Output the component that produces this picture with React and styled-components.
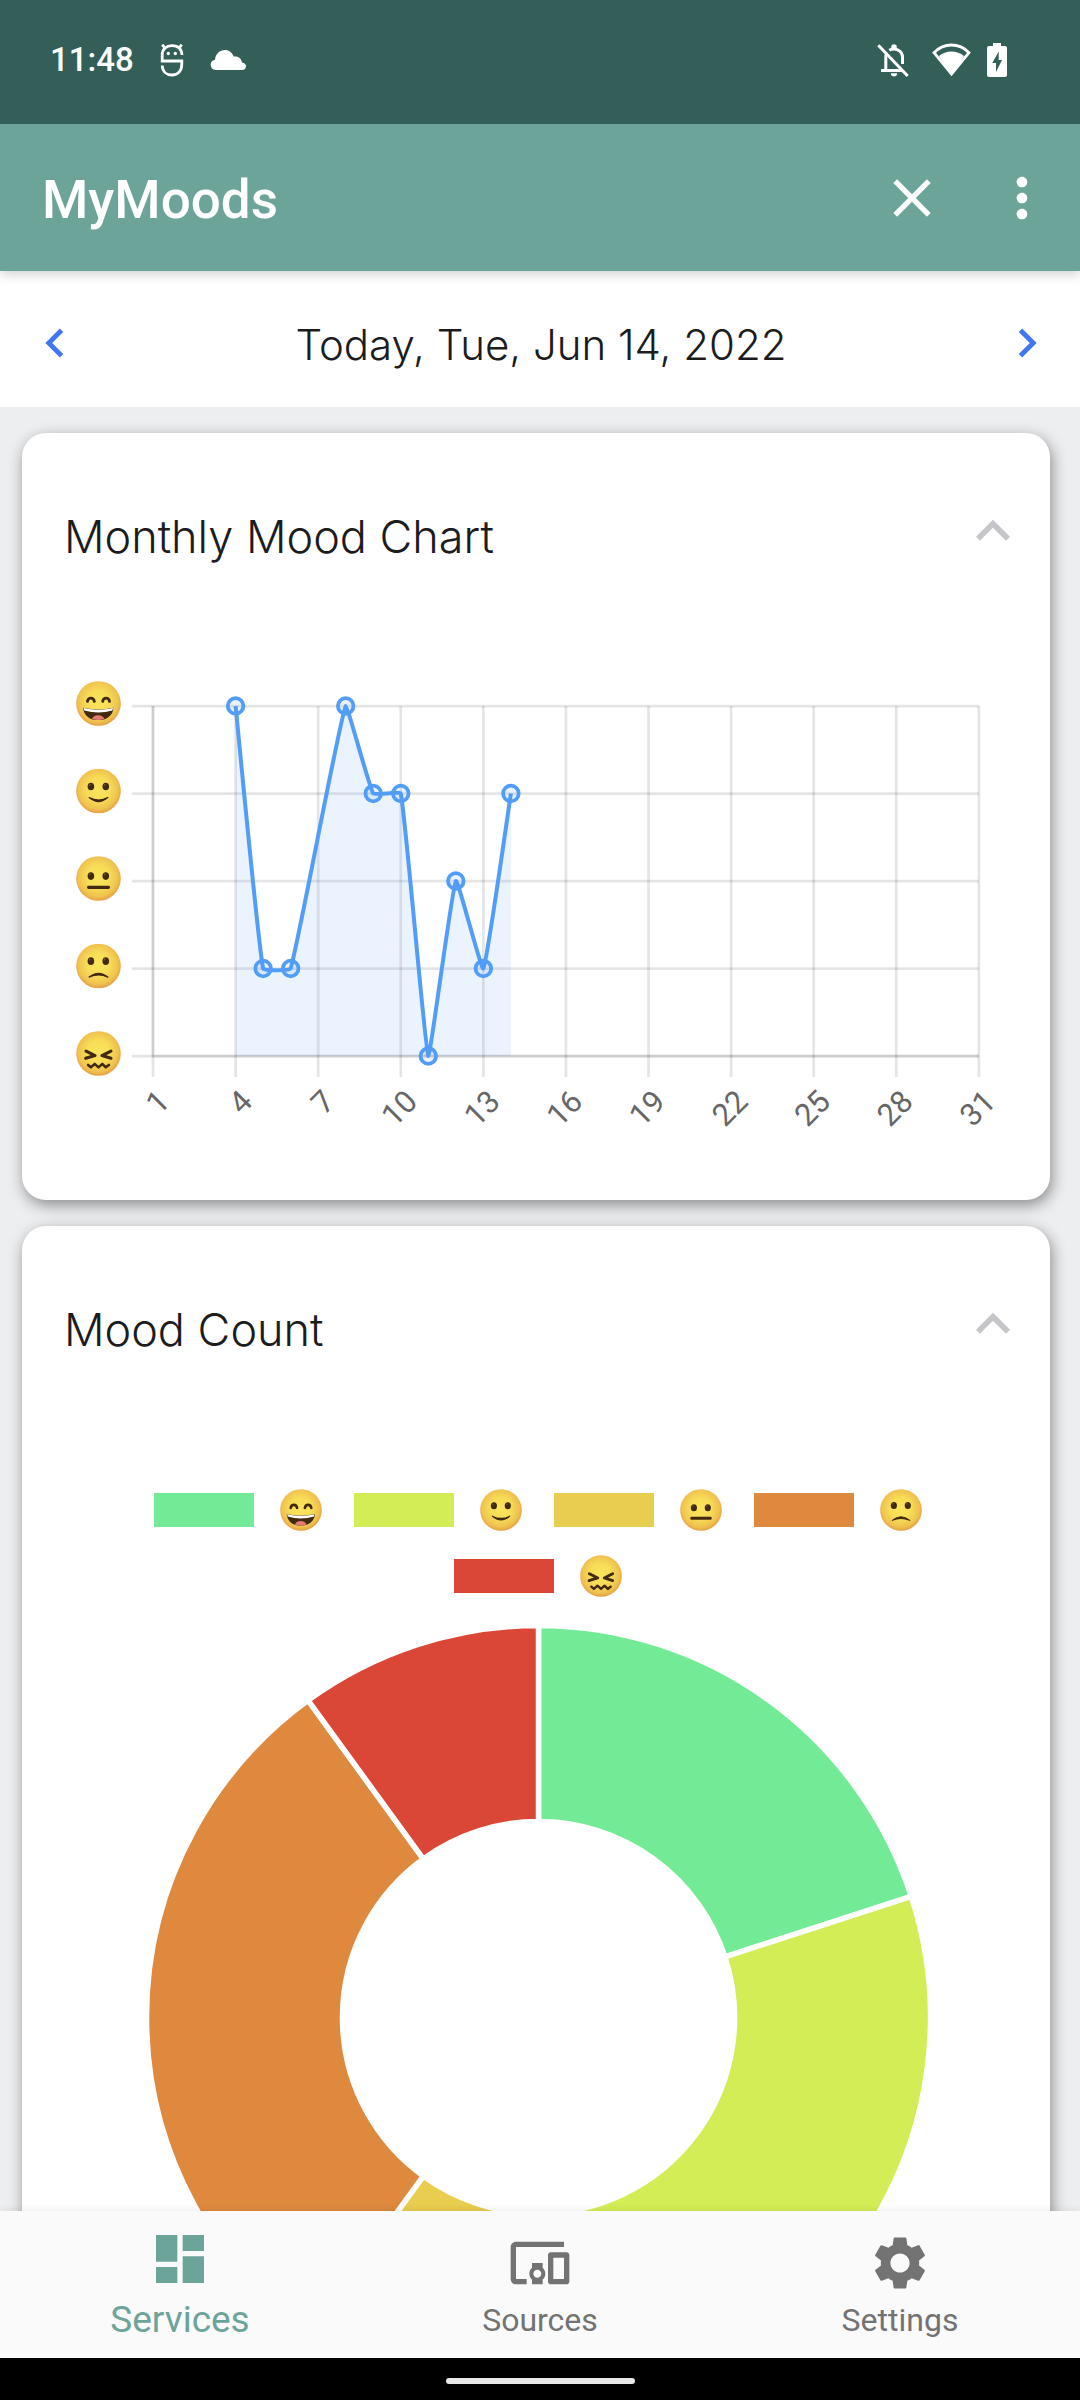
import React, { useId, useState } from "react";
import styled, { createGlobalStyle } from "styled-components";
import {
  MdClose,
  MdDashboard,
  MdDevicesOther,
  MdKeyboardArrowDown,
  MdKeyboardArrowLeft,
  MdKeyboardArrowRight,
  MdKeyboardArrowUp,
  MdMoreVert,
  MdSettings,
} from "react-icons/md";

const GlobalStyle = createGlobalStyle`
  *, *::before, *::after { box-sizing: border-box; }
  body { margin: 0; }
  button { border: 0; padding: 0; background: none; color: inherit; font: inherit; cursor: pointer; }
  h1, h2, p, ul { margin: 0; padding: 0; font-weight: inherit; }
  ul { list-style: none; }
  svg { display: block; flex: none; }
`;

const Screen = styled.div`
  display: flex;
  flex-direction: column;
  height: 100vh;
  background: #edeef0;
  font-family: Roboto, "Liberation Sans", sans-serif;
`;

const StatusBar = styled.header`
  position: relative;
  z-index: 2;
  display: flex;
  align-items: center;
  justify-content: space-between;
  flex: none;
  height: 124px;
  padding: 0 73px 4px 50px;
  background: #335f58;
  color: #fff;
`;

const StatusGroup = styled.div`
  display: flex;
  align-items: center;
  gap: ${(p) => p.$gap}px;
`;

const Clock = styled.span`
  font-size: 33px;
  font-weight: 500;
  line-height: 44px;
`;

const AppBar = styled.div`
  position: relative;
  z-index: 1;
  display: flex;
  align-items: center;
  flex: none;
  height: 147px;
  padding: 0 26px 0 42px;
  gap: 46px;
  background: #6da49a;
  color: #fff;
  box-shadow: 0 2px 12px rgba(0, 0, 0, 0.22);
`;

const AppTitle = styled.h1`
  flex: 1;
  padding-top: 4px;
  font-size: 53px;
  font-weight: 500;
  line-height: 64px;
`;

const IconButton = styled.button`
  display: flex;
  color: ${(p) => p.$color || "inherit"};
`;

const DateBar = styled.div`
  display: flex;
  align-items: center;
  justify-content: space-between;
  flex: none;
  height: 136px;
  padding: 8px 24px 0 26px;
  background: #fff;
`;

const DateText = styled.p`
  padding-top: 4px;
  color: #1c1c1e;
  font-family: Inter, "Open Sans", sans-serif;
  font-size: 42px;
  font-weight: 300;
  line-height: 64px;
`;

const Content = styled.main`
  display: flex;
  flex-direction: column;
  flex: 1;
  gap: 26px;
  min-height: 0;
  padding: 26px 30px 26px 22px;
  overflow-y: auto;
  scrollbar-width: none;
`;

const Card = styled.section`
  flex: none;
  padding-bottom: ${(p) => (p.$open ? 60 : 0)}px;
  border-radius: 24px;
  background: #fff;
  box-shadow: 2px 5px 15px rgba(0, 0, 0, 0.42);
`;

const CardHeader = styled.div`
  display: flex;
  align-items: flex-start;
  justify-content: space-between;
  padding: 64px 23px 0 42px;
`;

const CardTitle = styled.h2`
  color: #1c1c1e;
  font-family: Inter, "Open Sans", sans-serif;
  font-size: 45px;
  font-weight: 300;
  line-height: 80px;
`;

const LineChartSvg = styled.svg`
  width: 100%;
  height: auto;
  margin-top: 93px;
`;

const Tick = styled.text`
  fill: #666;
  font-family: Roboto, "Liberation Sans", sans-serif;
  font-size: 31px;
  text-anchor: end;
  dominant-baseline: central;
`;

const Legend = styled.ul`
  display: flex;
  flex-wrap: wrap;
  justify-content: center;
  gap: 24px 32px;
  margin-top: 119px;
  padding: 0 98px 0 102px;
`;

const LegendItem = styled.li`
  display: flex;
  align-items: center;
  gap: 26px;
`;

const Swatch = styled.span`
  width: 100px;
  height: 34px;
  background: ${(p) => p.$color};
`;

const DonutWrap = styled.div`
  display: flex;
  justify-content: center;
  margin-top: 28px;
  padding: 0 98px 0 102px;
`;

const DonutSvg = styled.svg`
  width: 100%;
  max-width: 785px;
  height: auto;
  flex: 0 1 auto;
`;

const TabBar = styled.nav`
  position: relative;
  display: flex;
  flex: none;
  height: 147px;
  background: #fafafa;
  box-shadow: 0 -1px 8px rgba(0, 0, 0, 0.08);
`;

const Tab = styled.a`
  display: flex;
  flex: 1;
  flex-direction: column;
  align-items: center;
  justify-content: flex-end;
  gap: ${(p) => (p.$active ? 7 : 3)}px;
  padding-bottom: 16px;
  color: ${(p) => (p.$active ? "#6da49a" : "#737373")};
  font-size: ${(p) => (p.$active ? 37 : 32)}px;
  line-height: 44px;
  text-decoration: none;
`;

const GestureBar = styled.footer`
  position: relative;
  display: flex;
  align-items: center;
  justify-content: center;
  flex: none;
  height: 42px;
  padding-top: 4px;
  background: #000;
`;

const GestureHandle = styled.span`
  width: 189px;
  height: 6px;
  border-radius: 3px;
  background: #e8e8e8;
`;

const MOODS = [
  { score: 5, name: "Great", color: "#73eb96", count: 2 },
  { score: 4, name: "Good", color: "#d2ed55", count: 3 },
  { score: 3, name: "Okay", color: "#e8cd4f", count: 1 },
  { score: 2, name: "Sad", color: "#df893f", count: 3 },
  { score: 1, name: "Awful", color: "#da4737", count: 1 },
];

const ENTRIES = [
  [4, 5],
  [5, 2],
  [6, 2],
  [8, 5],
  [9, 4],
  [10, 4],
  [11, 1],
  [12, 3],
  [13, 2],
  [14, 4],
];

const INK = "#412a10";

function Eyes({ y }) {
  return (
    <g fill={INK}>
      <ellipse cx="43" cy={y} rx="9.5" ry="11" />
      <ellipse cx="86" cy={y} rx="9.5" ry="11" />
      <circle cx="40" cy={y - 5} r="2.5" fill="#7a5a2a" />
      <circle cx="83" cy={y - 5} r="2.5" fill="#7a5a2a" />
    </g>
  );
}

const FEATURES = {
  5: (
    <>
      <g fill="none" stroke={INK} strokeWidth="8" strokeLinecap="round">
        <path d="M33 59C35 46 51 46 53 59" />
        <path d="M77 59C79 46 95 46 97 59" />
      </g>
      <path d="M21 77Q65 87 108 77C107 101 87 113 64 113S22 101 21 77Z" fill={INK} />
      <path d="M22 78Q65 88 107 78L105 85Q65 97 24 85Z" fill="#fff" />
      <path d="M46 110Q50 99 64 99T82 110Q64 116 46 110Z" fill="#e57b72" />
    </>
  ),
  4: (
    <>
      <Eyes y={52} />
      <path d="M38 84Q65 107 92 84Q66 98 38 84Z" fill={INK} stroke={INK} strokeWidth="3.5" strokeLinejoin="round" />
    </>
  ),
  3: (
    <>
      <Eyes y={58} />
      <rect x="32" y="86" width="66" height="9" rx="4" fill={INK} />
    </>
  ),
  2: (
    <>
      <Eyes y={51} />
      <path d="M38 97Q65 75 92 97Q65 85 38 97Z" fill={INK} stroke={INK} strokeWidth="3.5" strokeLinejoin="round" />
    </>
  ),
  1: (
    <g fill="none" stroke={INK} strokeLinecap="round" strokeLinejoin="round">
      <path d="M29 58L55 71L28 79" strokeWidth="9" />
      <path d="M101 58L75 71L101 79" strokeWidth="9" />
      <path d="M35 98L43 105L54 95L65 105L76 95L86 105L95 98" strokeWidth="7.5" />
    </g>
  ),
};

function Face({ mood, label, size, x, y }) {
  const id = useId();
  return (
    <svg x={x} y={y} width={size} height={size} viewBox="0 0 130 130" role="img" aria-label={label}>
      <defs>
        <radialGradient id={id} cx="0.49" cy="0.46" r="0.56">
          <stop offset="0" stopColor="#fae55a" />
          <stop offset="0.45" stopColor="#f7dd58" />
          <stop offset="0.8" stopColor="#efc24e" />
          <stop offset="1" stopColor="#e39743" />
        </radialGradient>
      </defs>
      <circle cx="65" cy="65" r="64.5" fill={`url(#${id})`} />
      {FEATURES[mood]}
    </svg>
  );
}

const AXIS_X = 131;
const DAY = 27.53;
const TOP = 36;
const STEP = 87.5;
const BOTTOM = TOP + STEP * 4;
const dayX = (day) => AXIS_X + (day - 1) * DAY;
const moodY = (score) => TOP + (5 - score) * STEP;
const clampY = (y) => Math.min(BOTTOM, Math.max(TOP, y));

function smoothPath(points, tension) {
  const controls = points.map((p, i) => {
    const prev = points[i - 1] || p;
    const next = points[i + 1] || p;
    const before = Math.hypot(p[0] - prev[0], p[1] - prev[1]);
    const after = Math.hypot(next[0] - p[0], next[1] - p[1]);
    const a = (tension * before) / (before + after);
    const b = (tension * after) / (before + after);
    const dx = next[0] - prev[0];
    const dy = next[1] - prev[1];
    return {
      enter: [p[0] - a * dx, clampY(p[1] - a * dy)],
      leave: [p[0] + b * dx, clampY(p[1] + b * dy)],
    };
  });
  return points
    .map((p, i) => (i === 0 ? `M${p}` : `C${controls[i - 1].leave} ${controls[i].enter} ${p}`))
    .join("");
}

function LineChart() {
  const points = ENTRIES.map(([day, score]) => [dayX(day), moodY(score)]);
  const line = smoothPath(points, 0.1);
  const days = Array.from({ length: 11 }, (_, i) => 1 + i * 3);
  const right = dayX(31);
  return (
    <LineChartSvg viewBox="0 0 1028 470" role="img" aria-label="Moods by day of the month">
      <g fill="none" strokeWidth="2.75">
        {MOODS.map(({ score }) => (
          <path
            key={score}
            d={`M110 ${moodY(score)}H${right}`}
            stroke="rgba(0,0,0,0.1)"
          />
        ))}
        {days.map((day) => (
          <path key={day} d={`M${dayX(day)} ${TOP}V${BOTTOM + 21}`} stroke="rgba(0,0,0,0.1)" />
        ))}
        <path d={`M${AXIS_X} ${TOP}V${BOTTOM}H${right}`} stroke="rgba(0,0,0,0.1)" />
      </g>
      <path
        d={`${line}V${BOTTOM}H${points[0][0]}Z`}
        fill="rgba(82,157,248,0.12)"
      />
      <path d={line} fill="none" stroke="#529df8" strokeWidth="4" strokeLinejoin="round" />
      {points.map(([x, y]) => (
        <circle key={x} cx={x} cy={y} r="7.8" fill="rgba(82,157,248,0.12)" stroke="#529df8" strokeWidth="3.8" />
      ))}
      {MOODS.map(({ score, name }) => (
        <Face key={score} mood={score} label={name} size={45} x={54} y={moodY(score) - 25} />
      ))}
      {days.map((day) => (
        <Tick key={day} transform={`translate(${dayX(day) + 11} ${BOTTOM + 40}) rotate(-45)`}>
          {day}
        </Tick>
      ))}
    </LineChartSvg>
  );
}

function Donut() {
  const total = MOODS.reduce((sum, m) => sum + m.count, 0);
  const at = (share, r) => {
    const angle = share * 2 * Math.PI;
    return `${393 + r * Math.sin(angle)} ${393 - r * Math.cos(angle)}`;
  };
  let start = 0;
  return (
    <DonutSvg viewBox="0 0 786 786" role="img" aria-label="Share of each mood">
      {MOODS.map(({ score, color, count }) => {
        const from = start;
        const to = start + count / total;
        start = to;
        return (
          <path
            key={score}
            d={`M${at(from, 392.5)}A392.5 392.5 0 0 1 ${at(to, 392.5)}L${at(to, 196.3)}A196.3 196.3 0 0 0 ${at(from, 196.3)}Z`}
            fill={color}
            stroke="#fff"
            strokeWidth="5.5"
          />
        );
      })}
    </DonutSvg>
  );
}

function MaskIcon() {
  return (
    <svg width="24" height="34" viewBox="0 0 24 34" fill="none" stroke="#fff" strokeWidth="2.8" aria-hidden="true">
      <path d="M22 12C21.6 5.5 17.5 2.6 12 2.6S2.2 6 2.2 12V18H21.8V21C21.8 28.5 17.5 32 12 32S2.4 28.5 2.2 22.5" />
      <path d="M2.2 1.8L5.4 5.4M21.8 1.8L18.6 5.4" />
      <circle cx="8.3" cy="10.5" r="1.7" fill="#fff" stroke="none" />
      <circle cx="15.3" cy="10.5" r="1.7" fill="#fff" stroke="none" />
    </svg>
  );
}

function CloudIcon() {
  return (
    <svg width="36" height="20" viewBox="0 0 36 20" fill="#fff" aria-hidden="true">
      <path d="M5.5 20A5.2 5.2 0 0 1 5 9.7C5.5 4 9.5 0 15 0C19 0 22.2 2.6 23.8 6.6C28 5.6 31.5 8.5 32 12.4C34.5 12.8 36 14.3 36 16.3C36 18.500 34.400 20 32 20Z" />
    </svg>
  );
}

function BellOffIcon() {
  return (
    <svg width="39" height="34" viewBox="0 0 39 34" fill="none" stroke="#fff" strokeWidth="3" aria-hidden="true">
      <path d="M1.3 2.3L30.7 33" />
      <path d="M4 27.5H25.5M8.8 27V14.5C8.8 12.8 9.1 11.4 9.7 10.2" />
      <path d="M12.2 7.2C17 4.5 25.5 6.5 25.5 14.5V21" />
      <path d="M14.3 6V3.6C14.3 .5 19.7 .5 19.7 3.6V6Z" fill="#fff" stroke="none" />
      <path d="M13.8 30.3H20.2C20.2 34.6 13.8 34.6 13.8 30.3Z" fill="#fff" stroke="none" />
    </svg>
  );
}

function WifiIcon() {
  return (
    <svg width="39" height="34" viewBox="0 0 39 34" aria-hidden="true">
      <path d="M2 9.7C12 -.6 27 -.6 37 9.7L19.5 31Z" fill="none" stroke="#fff" strokeWidth="2.8" />
      <path d="M7 13C14 7 25 7 32 13L19.5 33Z" fill="#fff" />
    </svg>
  );
}

function BatteryIcon() {
  return (
    <svg width="20" height="34" viewBox="0 0 20 34" fill="#fff" fillRule="evenodd" aria-hidden="true">
      <path d="M6 0H14V3H18A2 2 0 0 1 20 5V32A2 2 0 0 1 18 34H2A2 2 0 0 1 0 32V5A2 2 0 0 1 2 3H6ZM11.7 8.5L5.3 20H9V29L15 17H11.7Z" />
    </svg>
  );
}

function CollapsibleCard({ title, children }) {
  const [open, setOpen] = useState(true);
  const Arrow = open ? MdKeyboardArrowUp : MdKeyboardArrowDown;
  return (
    <Card $open={open}>
      <CardHeader>
        <CardTitle>{title}</CardTitle>
        <IconButton
          type="button"
          $color="#c5c5ca"
          aria-label={`Toggle ${title}`}
          aria-expanded={open}
          onClick={() => setOpen(!open)}
        >
          <Arrow size={68} />
        </IconButton>
      </CardHeader>
      {open && children}
    </Card>
  );
}

export default function App() {
  return (
    <Screen>
      <GlobalStyle />
      <StatusBar>
        <StatusGroup $gap={26}>
          <Clock>11:48</Clock>
          <MaskIcon />
          <CloudIcon />
        </StatusGroup>
        <StatusGroup $gap={16}>
          <BellOffIcon />
          <WifiIcon />
          <BatteryIcon />
        </StatusGroup>
      </StatusBar>
      <AppBar>
        <AppTitle>MyMoods</AppTitle>
        <IconButton type="button" aria-label="Close">
          <MdClose size={64} />
        </IconButton>
        <IconButton type="button" aria-label="More options">
          <MdMoreVert size={64} />
        </IconButton>
      </AppBar>
      <DateBar>
        <IconButton type="button" $color="#3f76f5" aria-label="Previous day">
          <MdKeyboardArrowLeft size={58} />
        </IconButton>
        <DateText>Today, Tue, Jun 14, 2022</DateText>
        <IconButton type="button" $color="#3f76f5" aria-label="Next day">
          <MdKeyboardArrowRight size={58} />
        </IconButton>
      </DateBar>
      <Content>
        <CollapsibleCard title="Monthly Mood Chart">
          <LineChart />
        </CollapsibleCard>
        <CollapsibleCard title="Mood Count">
          <Legend>
            {MOODS.map(({ score, name, color }) => (
              <LegendItem key={score}>
                <Swatch $color={color} />
                <Face mood={score} label={name} size={42} />
              </LegendItem>
            ))}
          </Legend>
          <DonutWrap>
            <Donut />
          </DonutWrap>
        </CollapsibleCard>
      </Content>
      <TabBar aria-label="Main">
        <Tab href="#services" $active aria-current="page">
          <MdDashboard size={64} />
          Services
        </Tab>
        <Tab href="#sources">
          <MdDevicesOther size={64} />
          Sources
        </Tab>
        <Tab href="#settings">
          <MdSettings size={64} />
          Settings
        </Tab>
      </TabBar>
      <GestureBar>
        <GestureHandle />
      </GestureBar>
    </Screen>
  );
}
